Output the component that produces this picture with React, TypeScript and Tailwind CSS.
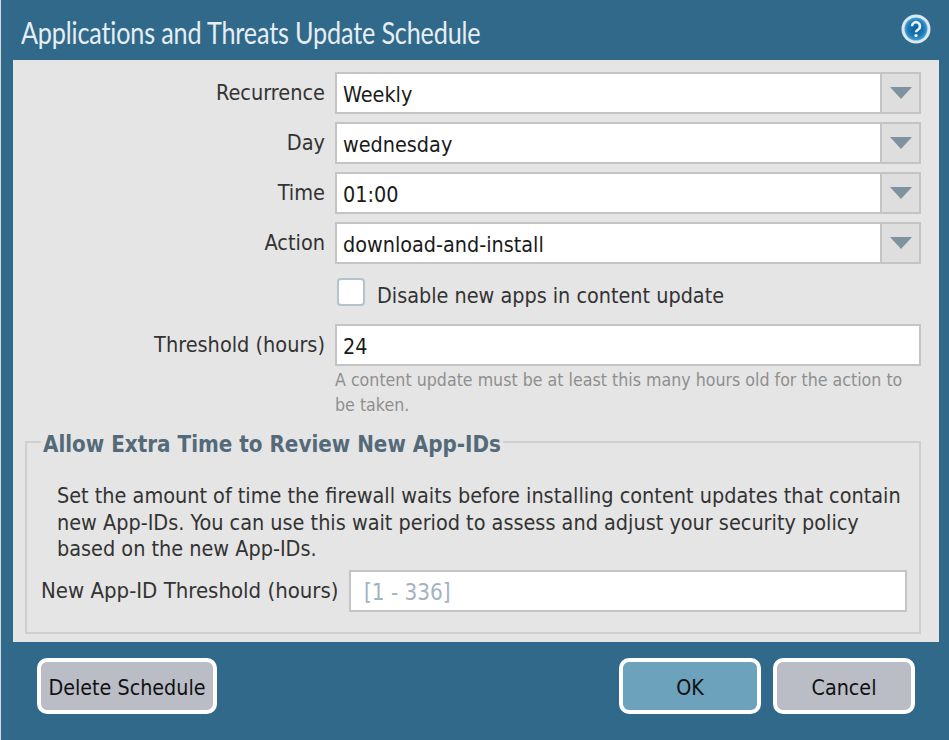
import { ReactNode } from "react";

const fontBody = "font-['DejaVu_Sans_Condensed','DejaVu_Sans',sans-serif] font-stretch-condensed";

function FieldLabel({ children }: { children: ReactNode }) {
	return <label className="w-[322px] pr-[10px] pt-[7px] text-right text-[21.5px] leading-[28px] text-[#333]">{children}</label>;
}

function SelectRow({ label, value }: { label: string; value: string }) {
	return (
		<div className="flex h-[42px] items-start">
			<FieldLabel>{label}</FieldLabel>
			<div className="flex h-[42px] w-[586px]">
				<div className="flex flex-1 items-center border-2 border-r-0 border-[#c4c4c4] bg-white pl-[6px] pt-[4px] text-[21.4px] text-[#1a1a1a]">{value}</div>
				<div className="flex w-[41px] items-center justify-center border-2 border-[#c4c4c4] bg-[#dedede]">
					<svg width="22" height="12" viewBox="0 0 22 12">
						<path d="M0 0h22L11 12z" fill="#7f929f" />
					</svg>
				</div>
			</div>
		</div>
	);
}

function DialogButton({ children, className }: { children: ReactNode; className: string }) {
	return <button className={`h-[56px] rounded-[10px] border-4 border-white pt-[4px] text-[21.3px] text-[#111] ${className}`}>{children}</button>;
}

export default function App() {
	return (
		<div className={`flex h-[740px] w-[949px] flex-col border-l border-[#d5d9dc] bg-[#30698a] ${fontBody}`}>
			<header className="flex h-[60px] items-start justify-between pl-[20px] pr-[18px]">
				<h1 className="mt-[14px] origin-left scale-x-[0.84] whitespace-nowrap font-['Lato',sans-serif] text-[30px] font-normal leading-[36px] tracking-[-0.2px] text-[#e6eef3]">
					Applications and Threats Update Schedule
				</h1>
				<svg className="mt-[14px]" width="30" height="30" viewBox="0 0 30 30">
					<defs>
						<radialGradient id="helpFill" cx="50%" cy="50%" r="50%">
							<stop offset="0%" stopColor="#0a5f99" />
							<stop offset="70%" stopColor="#1b7ab5" />
							<stop offset="100%" stopColor="#4fa3d1" />
						</radialGradient>
					</defs>
					<circle cx="15" cy="15" r="14.5" fill="#d9e9f2" />
					<circle cx="15" cy="15" r="11.5" fill="url(#helpFill)" />
					<path d="M11 12.2a4 4 0 1 1 6.2 3.3c-1.4 .9-2.2 1.5-2.2 2.8" fill="none" stroke="#e8f2f8" strokeWidth="2.6" />
					<circle cx="15" cy="21.6" r="1.7" fill="#e8f2f8" />
				</svg>
			</header>

			<main className="ml-[12px] flex h-[582px] w-[926px] flex-col bg-[#e5e5e5] pt-[12px]">
				<div className="flex flex-col gap-[8px]">
					<SelectRow label="Recurrence" value="Weekly" />
					<SelectRow label="Day" value="wednesday" />
					<SelectRow label="Time" value="01:00" />
					<SelectRow label="Action" value="download-and-install" />
				</div>

				<div className="mt-[14px] flex h-[28px] items-center pl-[324px]">
					<span className="h-[28px] w-[28px] rounded-[4px] border-2 border-[#b4c2cc] bg-white" />
					<span className="ml-[12px] pt-[9px] text-[21.4px] text-[#333]">Disable new apps in content update</span>
				</div>

				<div className="mt-[18px] flex h-[42px] items-start">
					<FieldLabel>Threshold (hours)</FieldLabel>
					<div className="flex h-[42px] w-[586px] items-center border-2 border-[#c4c4c4] bg-white pl-[6px] pt-[4px] text-[21.4px] text-[#1a1a1a]">24</div>
				</div>
				<p className="ml-[322px] mt-[2px] w-[586px] text-[17.65px] leading-[25px] text-[#8f8f8f]">
					A content update must be at least this many hours old for the action to be taken.
				</p>

				<fieldset className="ml-[12px] mt-[9px] h-[207px] w-[896px] border-2 border-[#cfcfcf] pl-[14px] pr-[12px]">
					<legend className="px-[2px] pt-[4px] text-[22.2px] font-bold leading-[26px] text-[#546a79]">Allow Extra Time to Review New App-IDs</legend>
					<p className="mt-[26px] pl-[16px] text-[21.45px] leading-[26.5px] text-[#333]">
						Set the amount of time the firewall waits before installing content updates that contain new App-IDs. You can use this wait period to assess and adjust your security policy based on the new App-IDs.
					</p>
					<div className="mt-[7px] flex items-start">
						<label className="whitespace-nowrap pt-[7px] text-[22px] leading-[28px] text-[#333]">New App-ID Threshold (hours)</label>
						<div className="ml-auto flex h-[42px] w-[558px] items-center border-2 border-[#c4c4c4] bg-white pl-[13px] pt-[4px] text-[22.3px] text-[#a3b3bf]">[1 - 336]</div>
					</div>
				</fieldset>
			</main>

			<footer className="flex pt-[16px]">
				<DialogButton className="ml-[36px] w-[180px] bg-[#babdc6]">Delete Schedule</DialogButton>
				<DialogButton className="ml-auto w-[142px] bg-[#6ca2bc]">OK</DialogButton>
				<DialogButton className="ml-[12px] mr-[34px] w-[142px] bg-[#babdc6]">Cancel</DialogButton>
			</footer>
		</div>
	);
}
